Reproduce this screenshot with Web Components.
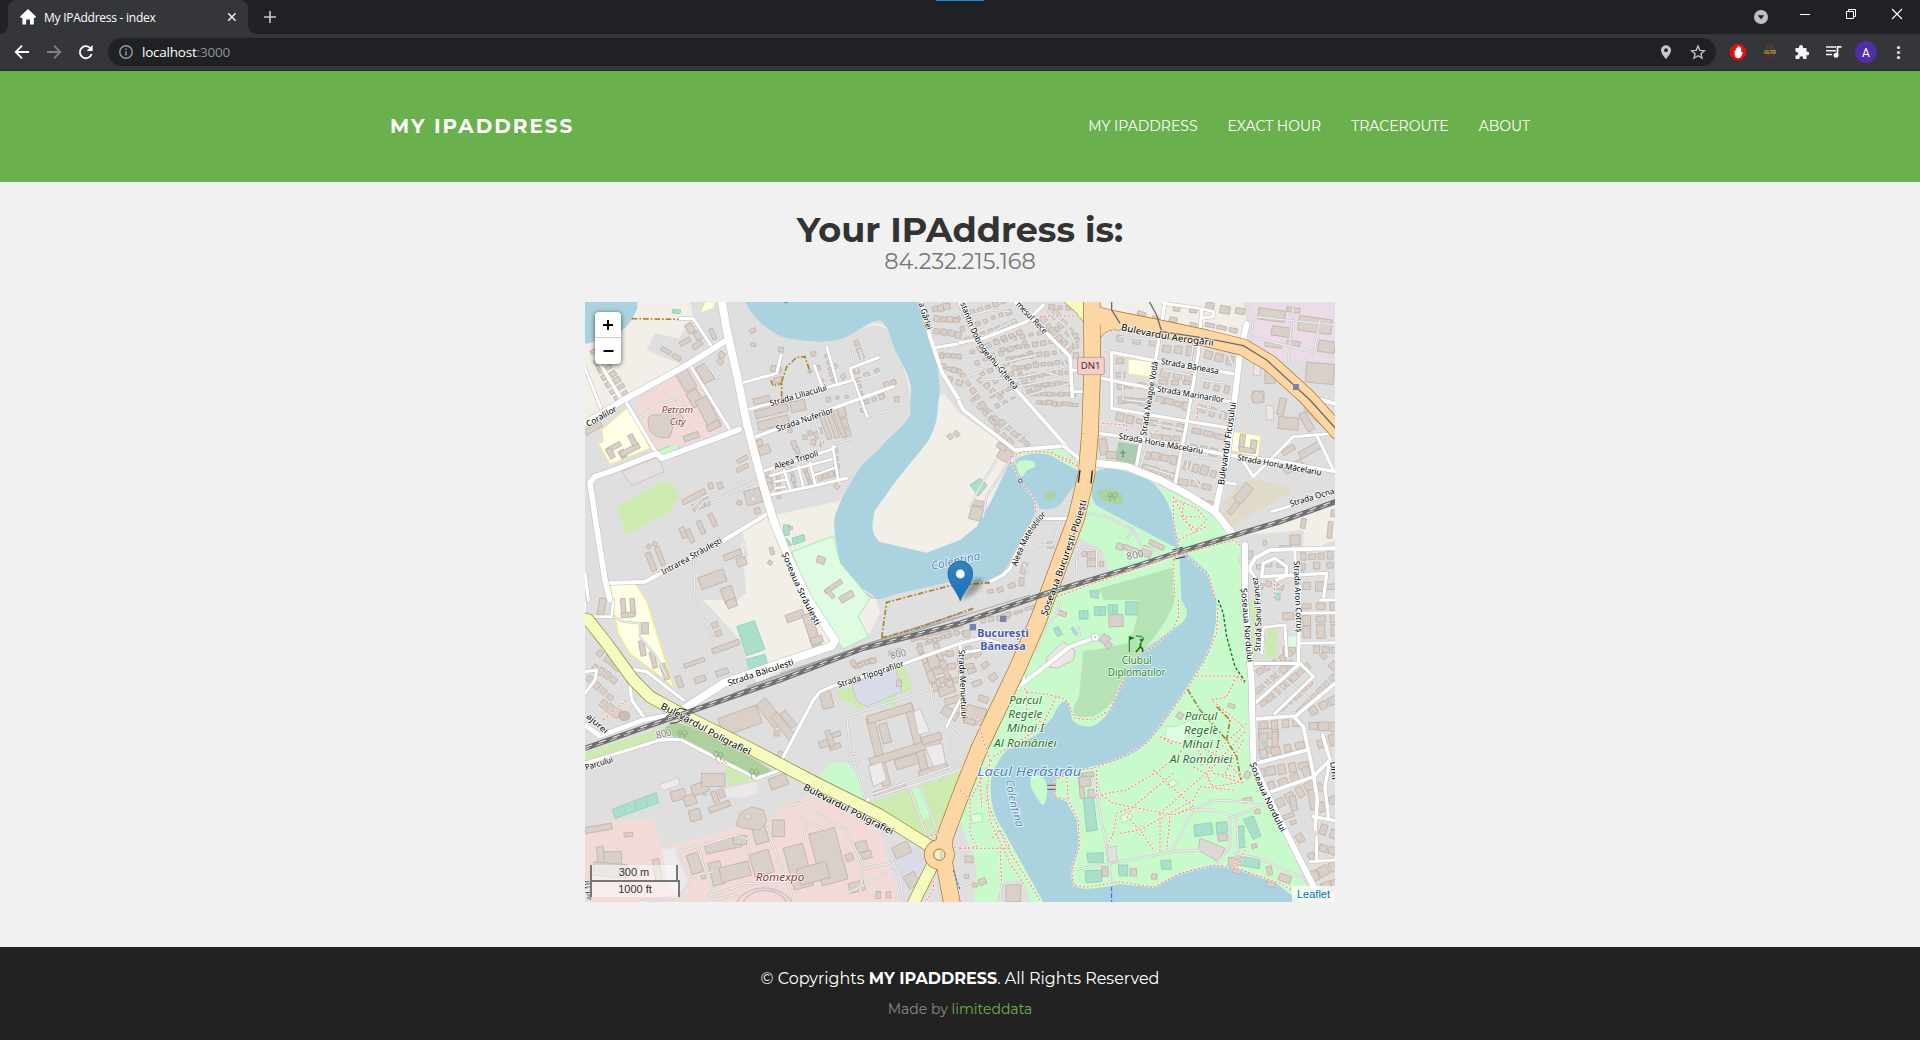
<!DOCTYPE html>
<html lang="en">
<head>
<meta charset="utf-8">
<title>My IPAddress - index</title>
<style>
html,body{margin:0;height:100%;overflow:hidden}
body{width:1920px;height:1040px;background:#f1f1f1;font-family:Montserrat,Inter,sans-serif}
</style>
</head>
<body>
<app-window></app-window>
<script>
const define = (name, html, after) => customElements.define(name, class extends HTMLElement {
  constructor() {
    super();
    const t = document.createElement('template');
    t.innerHTML = html;
    this.attachShadow({mode: 'open'}).append(t.content.cloneNode(true));
    if (after) after(this.shadowRoot, this);
  }
});

/* ---------- browser frame ---------- */
define('tab-strip', `
<style>
:host{display:flex;height:34px;background:#202124;position:relative;font:12px "Open Sans","Noto Sans",sans-serif;color:#fff;align-items:stretch}
.tab{margin-left:8px;width:240px;box-sizing:border-box;padding:0 11px 0 12px;background:#35363a;border-radius:8px 8px 0 0;display:flex;align-items:center;position:relative}
.tab::before,.tab::after{content:"";position:absolute;bottom:0;width:8px;height:8px}
.tab::before{left:-8px;background:radial-gradient(circle at 0 0,#202124 7.5px,#35363a 8px)}
.tab::after{right:-8px;background:radial-gradient(circle at 100% 0,#202124 7.5px,#35363a 8px)}
.t{margin-left:8px;flex:1;font-size:12px;letter-spacing:-.26px;white-space:nowrap}
.plus{margin:11px 0 0 16px}
.sp{flex:1}
.mark{position:absolute;left:936px;top:0;width:48px;height:1px;background:#1f8ad2}
svg{display:block}
</style>
<div class="tab">
<svg width="16" height="16" viewBox="0 0 16 16"><path d="M8 0 16 7.6 15 9H13.8V15.5H10V10.5H6.2V15.5H2.4V9H1L0 7.6Z" fill="#fff"/></svg>
<span class="t">My IPAddress - index</span>
<svg width="10" height="10" viewBox="0 0 10 10"><path d="M1.2 1.2 8.6 8.8M8.6 1.2 1.2 8.8" stroke="#e8eaed" stroke-width="1.6"/></svg>
</div>
<svg class="plus" width="12" height="12"><path d="M6 0V12M0 6H12" stroke="#c8c9cb" stroke-width="1.6"/></svg>
<span class="sp"></span>
<svg width="180" height="34" viewBox="1740 0 180 34" fill="none">
<circle cx="1761" cy="17" r="7" fill="#bdc1c6"/><path d="M1757.7 15.2H1764.3L1761 19.4Z" fill="#202124"/>
<path d="M1800 14.5H1810" stroke="#fff"/>
<path d="M1846.5 11.5H1853.5V18.5H1846.5ZM1848.500 11V9.500H1855.500V16.500H1854" stroke="#fff"/>
<path d="M1892 9 1902 19M1902 9 1892 19" stroke="#fff" stroke-width="1.1"/>
</svg>
<div class="mark"></div>`);

define('tool-bar', `
<style>
:host{display:flex;height:37px;box-sizing:border-box;background:#35363a;border-bottom:1px solid #28292c;padding:4px 0 4px 0;font:13.5px "Open Sans","Noto Sans",sans-serif}
.omni{width:1608px;height:28px;border-radius:14px;background:#202124;display:flex;align-items:center;color:#8f9296}
.omni b{font-weight:400;color:#fff}
.url{letter-spacing:-.22px;margin-left:9px;flex:1;line-height:28px}
svg{display:block;flex:none}
</style>
<svg width="108" height="28" viewBox="0 38 108 28" fill="none" stroke="#fff" stroke-width="1.8">
<path d="M29 52H16M22 45.700 15.700 52 22 58.300"/>
<path d="M47 52H60M54 45.700 60.300 52 54 58.300" stroke="#7f8185"/>
<path d="M90.600 48.500A6 6 0 1 0 91.600 54"/><path d="M92.600 45V51H86.600Z" fill="#fff" stroke="none"/>
</svg>
<div class="omni">
<svg width="14" height="14" viewBox="0 0 14 14" style="margin-left:11px" fill="none" stroke="#9aa0a6" stroke-width="1.4"><circle cx="7" cy="7" r="6.200"/><path d="M7 6.200V10.500M7 3.500V5"/></svg>
<span class="url"><b>localhost</b>:3000</span>
<svg width="64" height="28" viewBox="1652 38 64 28" fill="none"><path d="M1666 45.200A5 5 0 0 0 1661 50.200C1661 54 1666 59 1666 59S1671 54 1671 50.200A5 5 0 0 0 1666 45.200ZM1666 48.300A1.900 1.900 0 1 1 1666 52.100A1.900 1.900 0 0 1 1666 48.300Z" fill="#c6c7c9" fill-rule="evenodd"/>
<path d="M1698 46 1699.800 50.300 1704.400 50.700 1700.900 53.700 1702 58.200 1698 55.800 1694 58.200 1695.100 53.700 1691.600 50.700 1696.200 50.300Z" stroke="#c6c7c9" stroke-width="1.3"/></svg>
</div>
<svg width="204" height="28" viewBox="1716 38 204 28" fill="none">
<path d="M1734.700 44H1741.300L1746 48.700V55.300L1741.300 60H1734.700L1730 55.300V48.700Z" fill="#e30e0e"/>
<path d="M1734.600 50.500V54.500Q1735 58 1738.500 58.200Q1740.500 58 1741.500 56L1743 52.500Q1742 51.500 1741.200 53V47.600H1739.900V46.200H1738.500V46.600H1737.200V48H1735.900V50.500Z" fill="#fff"/>
<g font-family="Liberation Sans" font-weight="700" font-size="4.800" text-anchor="middle"><text x="1770" y="48.500" fill="#774428" textLength="7" lengthAdjust="spacingAndGlyphs">FOR</text><text x="1770" y="53.900" fill="#e0a52f" textLength="12" lengthAdjust="spacingAndGlyphs">HELPER</text><text x="1770" y="59" fill="#7b2327" textLength="8" lengthAdjust="spacingAndGlyphs">GUI</text></g>
<path d="M1795.500 48H1799V47A1.900 1.900 0 0 1 1803 47V48H1806.500V51.500H1807.300A1.900 1.900 0 0 1 1807.300 55.300H1806.500V59H1803.200V58.200A1.800 1.800 0 0 0 1799.400 58.200V59H1795.500V55.400H1796.300A1.800 1.800 0 0 0 1796.300 51.700H1795.500Z" fill="#f1f3f4"/>
<path d="M1826 47H1836M1826 50.800H1836M1826 54.500H1832" stroke="#f1f3f4" stroke-width="1.500"/><path d="M1837.500 54.500V46.900H1841.500" stroke="#f1f3f4" stroke-width="1.700"/><circle cx="1836" cy="55.200" r="2.500" fill="#f1f3f4"/>
<circle cx="1866" cy="52" r="11" fill="#512da8"/><text x="1866" y="56.500" fill="#fff" font-size="12" text-anchor="middle" font-family="Roboto">A</text>
<g fill="#f1f3f4"><circle cx="1898.500" cy="47.500" r="1.600"/><circle cx="1898.500" cy="52.500" r="1.600"/><circle cx="1898.500" cy="57.500" r="1.600"/></g>
</svg>`);

/* ---------- site chrome ---------- */
define('site-header', `
<style>
:host{display:block;height:111px;background:#6ab04c;color:#fff}
.in{width:1140px;height:109px;margin:0 auto;display:flex;align-items:center}
.brand{font-weight:700;font-size:20px;letter-spacing:2px;flex:1;white-space:nowrap}
nav{display:flex;gap:30px;font-size:14px}
</style>
<div class="in"><div class="brand">MY IPADDRESS</div><nav><slot></slot></nav></div>`);

define('nav-link', `
<style>:host{display:block;white-space:nowrap}a{color:#fff}</style><a><slot></slot></a>`);

define('ip-heading', `
<style>
:host{display:block;text-align:center;height:120px;box-sizing:border-box;padding-top:26px}
h1{margin:0;font-size:35px;line-height:44px;font-weight:700;color:#333}
p{margin:0;font-size:22.400px;line-height:18px;font-weight:400;color:#777}
</style>
<h1>Your IPAddress is:</h1><p><slot></slot></p>`);

define('site-footer', `
<style>
:host{display:block;background:#222;height:93px;box-sizing:border-box;padding-top:20px;text-align:center;color:#fff}
div{font-size:16px;line-height:24px}
p{margin:6px 0 0;font-size:14px;line-height:24px;color:#888}
span{color:#6ab04c}
</style>
<div>© Copyrights <b>MY IPADDRESS</b>. All Rights Reserved</div>
<p>Made by <span>limiteddata</span></p>`);

/* ---------- map: three units per CSS pixel ---------- */
const E = 1140, S = 900;
const shift = (s, dx, dy) => s.trim().split(/\s+/).map(p => { const [x, y] = p.split(',').map(Number); return (x + dx) + ',' + (y + dy); }).join(' ');
const parts = [];
const poly = (f, s, dx = 0, dy = 0, k = '') => parts.push(`<polygon points="${shift(s, dx, dy)}" fill="${f}" ${k ? `stroke="${k}" stroke-width="2.500"` : ''}/>`);
/* closed smooth outline through the midpoints of the given points */
const blob = (f, s, dx = 0, dy = 0, k = '') => {
  const p = s.trim().split(/\s+/).map(q => q.split(',').map(Number)).map(q => [q[0] + dx, q[1] + dy]);
  const m = (a, b) => `${(a[0] + b[0]) / 2},${(a[1] + b[1]) / 2}`;
  let d = 'M' + m(p[p.length - 1], p[0]);
  p.forEach((q, i) => d += `Q${q} ${m(q, p[(i + 1) % p.length])}`);
  parts.push(`<path d="${d}Z" fill="${f}" ${k ? `stroke="${k}" stroke-width="3"` : ''}/>`);
};
const line = (c, w, s, dx = 0, dy = 0, x = '') => parts.push(`<polyline points="${shift(s, dx, dy)}" fill="none" stroke="${c}" stroke-width="${w}" stroke-linejoin="round" ${x}/>`);
const roads = (list, dx, dy, edge = '#bfbdbb', fill = '#fff') => {
  list.forEach(([w, s]) => line(edge, w + 3, s, dx, dy, 'stroke-linecap="round"'));
  list.forEach(([w, s]) => line(fill, w, s, dx, dy, 'stroke-linecap="round"'));
};
const house = (x, y, w, h, a = 0) => parts.push(`<rect x="${-w / 2}" y="${-h / 2}" width="${w}" height="${h}" transform="translate(${x} ${y}) rotate(${a})"/>`);
const BF = 'fill="#d9d0c9" stroke="#c2b2a8" stroke-width="2.500"';
const houses = (list, dx = 0, dy = 0) => { parts.push(`<g ${BF}>`); list.forEach(b => house(b[0] + dx, b[1] + dy, b[2], b[3], b[4])); parts.push('</g>'); };
let seed = 7;
const rnd = () => (seed = (seed * 16807) % 2147483647) / 2147483647;
const rows = (list, dx = 0, dy = 0) => {
  parts.push(`<g ${BF}>`);
  list.forEach(([x1, y1, x2, y2, n, w, h]) => {
    const a = Math.atan2(y2 - y1, x2 - x1) * 180 / Math.PI;
    for (let i = 0; i < n; i++) {
      const t = n > 1 ? i / (n - 1) : 0;
      house(x1 + dx + (x2 - x1) * t, y1 + dy + (y2 - y1) * t + rnd() * 4 - 2, w * (.7 + rnd() * .5), h * (.7 + rnd() * .5), a);
    }
  });
  parts.push('</g>');
};
const label = (t, x1, y1, x2, y2, dx = 0, dy = 0, c = '#000', z = 25, x = '') => {
  const a = Math.atan2(y2 - y1, x2 - x1) * 180 / Math.PI, l = Math.hypot(x2 - x1, y2 - y1);
  parts.push(`<text transform="translate(${x1 + dx} ${y1 + dy}) rotate(${a.toFixed(2)})" textLength="${l.toFixed(0)}" lengthAdjust="spacingAndGlyphs" font-size="${z}" fill="${c}" ${x}>${t}</text>`);
};
let pid = 0;
const curved = (t, d, len, z = 25, c = '#000', x = '') => {
  const id = 'p' + pid++;
  parts.push(`<path id="${id}" d="${d}" fill="none" stroke="none"/><text font-size="${z}" fill="${c}" ${x}><textPath href="#${id}" textLength="${len}" lengthAdjust="spacingAndGlyphs">${t}</textPath></text>`);
};

function buildMap() {
  const W = '#aad3df', G = '#c8facc', L = '#f2efe9', P = '#cdebb0', T = '#aae0cb', TK = '#8fcdb5', Y = '#ffffe5', R = '#f2dad9', H = '#dffce2';
  parts.push('<rect x="0" y="0" width="2300" height="1830" fill="#dfdfdf"/>');
  /* unzoned land */
  poly(L, '15,120 180,6 350,6 385,95 330,60 300,110 330,180 200,260 120,310 15,360');
  poly('#dfdfdf', '225,98 200,150 320,200 430,110 415,6 330,6 345,80 310,120');
  poly(L, '15,180 50,180 130,310 15,370');
  blob(L, '640,120 780,125 900,50 950,130 1000,300 980,360 1010,300 1000,250 960,140 900,60 780,118 690,126');
  poly(L, '585,645 790,600 900,600 1040,330 1090,280 1140,340 1270,430 1300,470 1290,640 1150,780 1020,800 800,800 760,700 630,760');
  poly(L, '340,790 480,690 560,650 640,780 770,1020 530,1150 480,1020 370,900');
  poly(L, '640,760 760,700 890,900 900,940 870,1000 770,1030 720,960');
  poly('#dfdfdf', '340,785 480,700 500,880 470,900 370,900');
  poly(L, '530,1148 870,1035 900,1010 930,1010 900,1040 530,1160');
  poly(L, '800,710 1030,690 1030,760 1125,720 1125,600 1000,640 830,705', E, 0);
  poly(L, '420,6 850,6 860,70 845,140 700,110 440,50', E, 0);
  /* park */
  poly(G, '1520,500 1680,530 1780,580 1900,635 1955,700 1990,760 2000,900 2020,1380 2200,1806 1180,1806 1190,1700 1140,1560 1380,920 1500,640');
  poly('#dfdfdf', '350,710 425,750 450,820 250,870 300,760', E, 0);
  blob(G, '150,460 210,440 310,440 370,520 340,520 200,470', E, 0);
  poly('#dfdfdf', '310,620 360,540 350,650 250,860 180,870 80,900 100,850 170,790 220,640', E, 0);
  /* water */
  blob(W, '0,0 180,0 165,45 130,95 55,120 0,140');
  parts.push(`<path fill="${W}" d="M0,0H172Q160,60 120,97Q80,118 0,132ZM493,0C515,50 560,90 610,112C680,128 740,128 780,118C830,100 860,68 895,60C920,62 930,110 945,150C965,190 992,230 993,270L990,345C970,385 930,405 900,445L845,495C810,550 780,600 764,650C758,700 775,745 780,790L865,888Q880,900 905,896L950,882L1110,845L1225,846C1280,815 1290,790 1300,760L1340,690L1366,640L1368,605L1330,550L1318,515Q1300,480 1290,485L1275,515L1235,600L1190,680L1140,720L1040,758L900,726C878,705 876,690 878,665L884,632L950,540L1040,430C1060,400 1072,360 1073,330L1079,265C1078,200 1055,130 1022,30L1012,0Z"/>
<path fill="${W}" d="M1305,480Q1355,450 1410,465L1498,515L1490,545L1440,615Q1410,635 1378,625L1366,600L1330,550Z"/>
<path fill="${W}" d="M1538,520Q1560,502 1600,507Q1680,522 1720,550Q1760,590 1775,640L1798,740L1882,815L1908,900Q1915,980 1885,1060L1835,1140L1790,1210L1740,1285L1700,1330Q1640,1385 1530,1400L1500,1415L1430,1435L1427,1490L1460,1505L1490,1560L1497,1640L1480,1700Q1465,1745 1500,1765Q1540,1770 1620,1752Q1690,1760 1730,1760L1800,1720L1900,1693L1970,1703L2090,1750L2160,1806L1390,1806L1320,1680L1270,1590Q1232,1540 1232,1460Q1230,1410 1280,1350L1370,1305L1420,1250Q1435,1205 1460,1202Q1470,1210 1474,1250Q1480,1280 1535,1280Q1580,1260 1600,1210L1640,1120L1690,1050L1790,980Q1825,960 1820,930L1805,900L1797,760L1790,745L1640,665L1555,620Q1530,600 1536,570Z"/>`);
  blob(G, '165,482 220,480 230,500 200,510 185,535 175,520', E, 0);
  blob('#aed1a0', '255,578 285,572 290,590 270,602 255,595', E, 0);
  blob('#aed1a0', '405,580 430,565 480,572 495,600 480,615 430,605', E, 0);
  blob(G, '225,520 265,540 258,610 245,618 210,560 212,530', E, S);
  /* green, golf and parkland patches */
  parts.push('<path fill="#b5e3b5" d="M1560,865L1778,803L1783,905Q1765,960 1700,1040Q1650,1090 1610,1190Q1580,1230 1540,1250L1490,1250Q1475,1235 1482,1220L1497,1190L1510,1052L1560,1047L1640,1030Q1680,970 1672,900L1570,900Z"/>');
  poly(P, '110,620 250,542 275,545 302,595 275,615 278,628 140,706 125,684 133,678');
  poly('#c8facc', '235,452 292,430 300,444 245,470', 0, 0, '#8edc92');
  poly(H, '635,755 760,708 782,790 870,895 835,950 865,1010 790,1047 700,930', 0, 0, '#93ea9b');
  poly(P, '15,455 260,380 300,380 560,520 520,520 430,485 290,410 240,412 15,495', 0, S);
  blob('#add19e', '260,370 320,370 590,510 560,535 520,530 430,480 330,425 250,400', 0, S);
  poly(P, '435,490 540,530 505,545 445,560', 0, S);
  poly('#c8facc', '705,545 750,490 805,488 845,540 850,610 840,625 710,560', 0, S);
  poly(P, '850,615 1140,515 1140,570 1075,680 1070,700 1020,712 860,640', 0, S);
  poly(G, '995,565 1030,560 1050,650 1030,660', 0, S);
  poly(P, '770,270 830,255 830,300 950,320 930,200 970,195 1000,270 960,280 830,330 820,310 785,305', 0, S);
  poly('#dadbe8', '815,255 945,200 965,275 860,320 830,300', 0, S, '#c0c0cf');
  poly('#dadbe8', '930,765 1000,740 1040,780 1000,870 970,860 940,810', 0, S);
  poly(Y, '65,390 145,320 210,445 90,493 55,430 70,425', 0, 0, '#f0e48a');
  poly(Y, '90,855 165,850 200,905 280,1160 230,1120 150,1060 115,1000 100,920', 0, 0, '#fbf04d');
  poly(Y, '375,6 405,6 400,25 360,38', 0, 0, '#f0e48a');
  poly(Y, '505,178 575,185 580,235 555,228 505,222', E, 0, '#f0e98a');
  poly(Y, '820,395 902,408 893,472 812,450', E, 0, '#f0e98a');
  poly(R, '160,310 285,232 325,200 440,385 330,435 220,440');
  poly(R, '15,680 105,660 222,660 245,745 590,650 595,615 680,585 850,650 900,700 960,905 15,905', 0, S);
  poly('#ecdce9', '875,6 1130,6 1130,185 950,180 855,125', E, 0);
  poly('#e0dbc9', '845,545 900,540 990,560 990,580 880,640 800,690 785,610', E, 0);
  poly('#aacbaf', '475,425 535,435 530,495 465,480', E, 0);
  poly(H, '620,380 650,380 690,360 705,380 665,430 625,425 615,405', E, S, '#b4e5b9');
  poly('#e5e0e0', '125,515 235,470 253,515 155,557', 0, 0, '#d0b8b8');
  poly('#ece8e8', '435,568 530,545 535,575 500,592 440,592', 0, S);
  poly('#eceaea', '235,555 295,533 300,555 250,572', 0, S, '#d8c4c4');
  poly('#eceaea', '245,750 285,742 330,830 320,880 265,860', 0, S);
  poly('#ece6e6', '258,175 310,125 345,150 340,180 290,205 265,200', E, S, '#c9b5b5');
  poly('#ded8d8', '720,715 795,745 775,785 715,750', E, S, '#c9b0b0');
  poly('#dfdfdf', '125,855 185,850 215,905 110,905', E, S);
  poly(P, '870,0 890,0 890,175 870,180', E, S); poly(P, '920,90 955,85 945,175 915,175', E, S); poly(H, '985,110 1012,108 1012,160 985,160', E, S);

  /* sport pitches */
  const pitch = (s, dx, dy) => poly(T, s, dx, dy, TK);
  ['277,28 302,30 300,41 277,39', '610,675 628,675 628,705 612,707', '636,715 672,703 675,722 640,735', '620,715 635,735 625,738'].forEach(s => pitch(s));
  ['470,80 523,62 555,148 500,167', '500,178 555,163 563,192 510,210', '97,628 228,578 236,608 106,655'].forEach(s => pitch(s, 0, S));
  ['30,555 60,535 82,555 55,588', '390,872 418,870 415,895 392,892'].forEach(s => pitch(s, E, 0));
  ['497,5 532,5 532,45 497,45', '358,32 384,32 384,57 358,57', '404,20 436,20 436,46 404,46', '444,14 472,14 472,40 444,40', '280,85 295,80 308,102 293,110', '370,595 400,590 412,690 380,695', '702,675 755,668 760,702 705,710', '768,668 800,665 803,695 770,700', '850,658 880,648 903,708 880,718', '836,678 852,678 852,710 836,712', '836,715 854,715 854,742 838,744', '380,760 430,758 430,788 385,788', '375,812 425,810 425,845 378,848', '475,795 503,795 503,828 477,828', '602,782 632,780 634,808 605,808', '840,768 900,775 898,806 840,796'].forEach(s => pitch(s, E, S));
  line('#8fcdb5', 2, '371,932 371,957', E); line('#8fcdb5', 2, '419,920 419,946', E); line('#8fcdb5', 2, '458,914 458,940', E);
  ['130,616 138,644', '163,603 171,632', '196,590 204,620'].forEach(s => line('#8fcdb5', 2, s, 0, S));
  ['32,645 65,640 68,665 38,670', '620,550 640,537 655,550 630,565', '480,650 505,635 518,650 490,670', '525,690 542,678 556,690 540,705'].forEach(s => poly(H, s, E, S, '#a5dca8'));

  /* buildings, north-west */
  houses([[315,125,34,14,-30],[258,152,30,12,30],[290,172,28,12,30],[330,85,20,30,-30],[357,105,26,26,-30],[398,102,12,34,-25],[352,135,32,16,-35],[318,240,38,66,-30],[345,295,36,48,-30],[385,340,38,100,-28],[375,220,34,56,-30],[400,378,40,20,-25],[334,410,46,18,-20],[425,165,18,18,30],[420,185,18,14,40],[40,385,56,16,-30],[100,442,48,14,-28],[92,460,16,30,-28],[128,462,18,24,-28],[150,450,62,16,-28],[158,420,16,36,-28],
  [342,590,76,16,-28],[355,618,36,20,-25],[380,605,14,24,-20],[392,558,14,18,-20],[420,557,14,20,-20],[310,698,16,34,-25],[330,708,14,42,-25],[363,682,14,42,-25],[398,660,14,42,-25],[487,478,34,12,-28],[487,504,38,12,-28],[478,608,14,12,20],[520,590,48,44,-15],[532,632,16,18,-20],[213,785,16,58,-20],[240,768,14,58,-22],[206,740,12,12,30],[225,732,12,12,30],[458,765,56,18,-22],[485,785,28,26,-20],[397,838,80,38,-20],[445,885,34,48,-20],[576,753,12,22,-15],[570,788,12,12,30],[518,92,18,12,-25],[520,134,14,10,10],
  [545,300,50,18,-14],[575,333,100,24,-14],[580,368,94,26,-14],[654,318,44,32,-12],[594,240,24,16,-15],[603,149,14,14,10],[580,205,14,18,10],[598,210,12,16,10],[553,450,34,26,-20],[538,428,18,18,-20],[643,435,14,26,-20],[652,452,12,20,-20],[675,412,12,14,0],[710,405,14,20,-25],[630,392,12,12,-10],[723,780,24,20,20],[760,860,60,14,-35],[800,890,44,20,-30],[750,880,34,12,50],[1110,410,14,16,-45],[1130,402,14,18,-45],[632,684,10,10,0]]);
  parts.push(`<path ${BF} d="M204,360Q205,340 240,345Q262,328 300,340Q320,360 300,378L282,372Q275,390 270,412Q225,420 208,390Z"/><circle cx="520" cy="597" r="9" fill="#dfdfdf" stroke="#c2b2a8" stroke-width="2"/>`);
  rows([[50,190,110,295,6,15,18],[75,180,135,280,6,15,18],[40,155,60,200,2,14,16],[740,170,760,240,5,11,11],[765,200,790,230,2,14,14],[830,130,845,170,3,14,14],[700,160,715,205,2,14,14],[830,215,850,330,6,14,14],[783,335,803,400,3,26,24],[560,520,570,560,3,20,20],[635,515,645,560,3,24,10],[675,505,690,550,3,24,10],[720,530,770,520,4,12,24],[765,450,770,500,3,13,14],[690,215,725,240,2,12,12],[860,305,905,290,3,14,12],[860,225,890,212,2,14,12],[920,255,940,245,2,16,18],[950,298,951,298,1,18,16],[595,540,596,585,3,30,10],[770,560,772,562,1,15,13],[690,400,720,395,2,12,15],[700,425,725,430,2,12,15],[745,298,800,292,3,12,12]]);
  houses([[735,375,14,90,-20],[757,370,14,92,-20],[778,370,14,90,-20]]);

  /* dense blocks either side of the trunk road */
  for (let r = 0; r < 9; r++) rows([[12 + r * 15, 55 + r * 33, 150 + r * 16, 5 + r * 31, 7, 15, 13]], E - 20, 0);
  for (let r = 0; r < 8; r++) rows([[110 + r * 18, 125 + r * 26, 290 + r * 8, 90 + r * 32, 8, 15, 12]], E, 0);
  rows([[10,230,110,380,8,18,15],[40,300,150,425,7,18,15],[90,340,200,430,7,17,15],[60,240,120,290,4,18,15],[250,60,330,150,6,16,20],[285,45,350,120,4,18,24],[345,110,348,165,3,20,18],[275,20,350,25,4,16,13]], E, 0);
  rows([[1065,25,1100,20,3,17,16],[1070,55,1130,60,4,18,16],[1070,95,1135,105,4,16,16],[1085,165,1138,170,4,16,16],[1090,200,1138,215,4,16,14],[1110,240,1138,250,2,16,14]]);
  rows([[480,115,580,130,3,26,20],[480,185,485,300,4,20,22],[510,255,580,262,3,24,20],[500,300,550,305,3,22,20],[620,145,690,155,3,24,26],[615,220,690,235,3,26,22],[610,245,680,250,3,24,14],[600,300,680,318,4,26,22],[480,350,540,365,3,24,20],[580,370,660,385,3,28,22],[590,410,650,415,3,26,16],[745,165,810,180,3,24,24],[740,255,800,270,3,20,24],[725,325,790,345,3,22,24],[710,395,780,410,3,28,20],[560,465,640,480,4,22,22],[560,505,640,530,4,24,20],[700,440,760,455,3,22,22],[680,495,760,520,4,22,26],[670,545,740,560,3,26,18],[690,590,750,610,3,20,14],[640,60,700,75,2,22,14],[545,40,590,55,2,26,14],[650,25,700,30,2,26,16],[750,75,820,90,3,26,16],[750,20,840,35,3,30,22]], E, 0);
  houses([[935,45,80,34,8],[1065,75,100,44,8],[965,95,60,28,8],[940,135,50,14,8],[1100,140,50,34,8],[1080,220,84,60,5],[1000,30,40,14,8],[1000,130,40,14,8],[930,230,30,40,0],[895,290,34,34,0],[985,370,60,36,5],[965,320,20,50,12],[1060,340,60,20,45],[1040,365,60,22,60],[1050,450,70,22,-30],[985,450,40,16,-30],[1000,500,60,20,-30],[430,440,24,48,-8],[455,465,30,20,0],[846,425,16,44,8],[880,440,18,40,8],[860,450,44,14,8],[850,580,60,30,-50],[820,625,40,16,-50],[135,465,40,36,30],[125,440,30,16,30],[48,640,36,40,15],[55,610,34,16,10],[395,765,26,20,0],[395,790,26,20,0],[425,792,12,14,0],[372,762,14,14,0],[480,740,22,18,20],[520,750,60,14,20],[590,735,48,14,25],[560,755,30,30,20],[185,845,14,24,0],[192,805,16,34,15],[92,874,16,10,-10],[272,735,18,18,0],[1005,720,30,30,0],[975,745,34,16,0],[870,765,16,24,0],[1110,690,14,50,5],[1120,640,14,20,5],[1030,670,14,30,10]], E, 0);
  parts.push(`<circle cx="2032" cy="292" r="18" ${BF}/><rect x="2022" y="176" width="20" height="50" fill="#ece8e8" stroke="#cfb8b8" stroke-width="2" transform="rotate(5 2030 200)"/><rect x="2058" y="316" width="22" height="44" fill="#ece8e8" stroke="#cfb8b8" stroke-width="2"/>`);

  /* south-west */
  houses([[437,140,86,16,-20],[343,188,64,12,-20],[426,217,38,18,-20],[360,238,34,18,-20],[298,245,16,36,-20],[405,75,18,16,-20],[415,100,18,16,-20],[645,48,56,24,-20],[695,90,28,100,-18],[710,120,36,20,-18],[187,145,16,46,-10],[220,180,14,50,-15],[254,215,16,50,-20],[195,85,20,34,0],[130,20,14,50,-5],[158,20,14,50,-5],[144,45,42,14,-5],[455,10,30,24,-20],[65,20,20,50,10],[480,362,122,56,-20],[570,340,36,90,-38],[610,380,24,90,-38],[625,358,20,56,-40],[590,400,16,16,0],[600,475,22,40,25],[595,545,54,34,-20],[740,300,34,50,-15],[735,430,36,20,-20],[765,405,34,14,-20],[765,440,34,14,-20],[750,415,16,50,-20],[345,645,34,34,-15],[418,620,66,18,-20],[295,585,44,30,-15],[330,600,36,30,-20],[360,565,50,32,-20],[400,540,70,40,0],[405,590,16,34,-20],[425,580,16,26,-20],[145,704,26,12,-5],[55,685,82,18,-10],[95,790,60,70,0],[62,770,20,60,-5],[232,810,20,66,-10],[90,810,100,40,5],[345,790,36,60,-18],[430,735,110,32,-12],[480,720,40,26,0],[410,820,36,70,-14],[465,815,90,44,-14],[545,790,60,70,-16],[540,700,40,60,-15],[595,685,36,50,0],[655,800,60,130,-15],[745,770,80,160,-15],[700,820,90,50,-15],[845,740,34,32,-15],[860,765,30,22,-15],[808,772,22,22,-20],[830,860,46,30,-15],[895,885,14,22,0],[925,885,14,18,0],[965,750,50,36,-25],[995,840,36,40,-30],[370,830,12,12,0]], 0, S);
  houses([[895,455,24,210,-14],[1010,415,24,210,-14],[930,340,140,24,-17],[975,455,220,24,-17],[930,570,100,18,-17],[1060,510,90,18,-17],[980,485,70,30,-17],[1055,415,60,22,-17],[915,400,26,60,-14],[1060,180,34,46,-12],[1085,160,34,16,-15],[1070,215,46,18,-15],[1090,240,50,18,-15],[1100,270,50,26,-20],[1110,340,50,26,30],[1120,300,50,20,-15],[850,190,60,14,-20],[957,250,14,20,0],[820,190,14,20,-20]], 0, S);
  ['865,500 905,485 920,540 880,560', '1035,440 1085,430 1098,490 1060,500', '1000,335 1020,325 1050,395 1015,405'].forEach(s => poly('#eceaea', s, 0, S, '#cdb8b8'));
  parts.push(`<path ${BF} d="M468,1575L480,1540L515,1520L550,1530L560,1565L540,1590L490,1585Z"/><path d="M495,1555a10,8 0 1 0 16,-10a10,8 0 1 0 -16,10Z" fill="#dfdfdf" stroke="#b9a99f" stroke-width="2"/>`);
  rows([[45,200,100,240,4,18,20],[30,240,90,290,4,18,20],[60,160,110,200,3,22,20],[70,310,110,340,3,18,24],[1020,135,1110,105,5,14,12],[840,195,880,182,3,16,14],[930,160,955,155,2,14,13],[1070,250,1130,240,3,18,18]], 0, S);

  /* south-east */
  houses([[305,40,28,14,20],[468,62,42,36,-3],[435,118,26,26,35],[445,135,18,18,35],[380,525,44,14,-8],[365,560,14,70,-4],[395,580,22,24,0],[375,545,34,30,-8],[788,712,28,22,-5],[883,738,16,12,-20],[862,600,26,14,-10],[892,635,16,12,0],[820,785,30,26,0],[862,525,16,20,30],[830,815,24,10,10],[435,815,18,28,0],[520,817,20,22,0],[583,830,16,16,10],[928,812,16,26,-10],[975,835,36,22,20],[932,853,26,14,15],[815,318,20,12,20],[660,347,18,18,-60],[70,297,28,18,20],[45,345,60,50,15],[30,365,34,16,15],[985,648,36,12,-20],[1000,667,18,10,-20],[27,778,24,20,0],[67,845,22,18,-20],[160,880,44,50,0],[20,830,12,12,0],[45,855,14,12,0],[925,400,60,30,0],[910,430,26,60,0],[945,425,18,60,0],[935,450,40,18,0]], E, S);
  rows([[1040,60,1125,55,3,30,26],[1040,95,1125,90,3,26,36],[1040,20,1125,18,3,30,22],[1070,150,1125,150,3,22,20],[985,50,988,150,2,24,34],[900,215,990,160,5,18,18],[895,270,990,190,6,20,18],[910,310,1040,200,8,20,18],[970,320,1050,250,5,22,18],[1020,330,1120,235,6,22,18],[910,375,1010,370,4,24,24],[910,460,1020,435,4,26,24],[900,520,1030,495,5,26,26],[935,560,1040,520,4,24,34],[960,610,1050,560,4,28,28],[1000,610,1060,600,2,24,50],[1060,330,1120,300,3,28,26],[1060,380,1120,380,3,26,26],[1085,430,1120,420,2,24,34],[1080,560,1120,520,2,24,30],[1085,620,1120,600,2,28,24],[1020,715,1055,770,2,24,26],[1090,690,1120,700,2,24,26],[1090,745,1120,755,2,24,20],[1060,830,1120,800,3,28,26],[1100,860,1125,850,2,26,28],[1090,170,1120,200,2,20,20]], E, S);
  rows([[925,790,960,790,2,18,20],[1030,770,1110,765,4,20,20],[1030,800,1110,795,3,18,24],[925,850,960,860,2,22,20],[1040,860,1080,860,2,26,26],[900,800,900,860,2,16,24],[915,730,930,728,1,14,14],[1110,860,1112,880,1,20,40]], E, 0);
  rows([[280,120,420,78,9,15,12],[400,70,430,100,2,14,14],[420,150,426,250,4,18,16],[390,160,395,200,2,20,24],[300,150,345,260,5,30,18],[350,140,390,250,5,28,18],[440,170,470,250,3,20,24],[490,60,560,50,4,16,14]], 720, 900);
  rows([[1295,855,1260,870,2,20,12],[1280,945,1350,925,3,26,10],[1050,1025,1130,1000,4,16,12],[1160,1000,1170,1100,3,18,22],[1190,1060,1240,1130,3,20,26]]);

  /* minor ways */
  const thin = (s, dx, dy) => { line('#c3c3c3', 7, s, dx, dy); line('#efefef', 4, s, dx, dy); };
  ['340,785 345,860 340,900','480,690 500,770','335,655 370,605 430,590 530,545','335,625 370,590 430,575 530,530','175,355 240,310 300,295 330,340','365,170 410,235 450,215','815,150 830,215','840,150 850,190','835,240 900,222','862,350 950,325','735,440 820,415','705,360 730,440','850,870 880,890'].forEach(s => thin(s));
  ['345,0 400,120','100,50 130,65 180,70 180,110 230,170 260,230','780,355 1060,265','1050,250 1060,330 1140,400','760,270 800,350 810,450 860,610','860,600 1140,510','870,585 1140,490','990,570 1045,720','1020,560 1075,700','645,615 680,560','600,620 660,610 800,690 850,800 840,880','840,808 930,790','660,655 740,690','680,670 670,720','560,680 640,900','300,755 470,705 505,720 500,760','350,740 410,905','290,760 330,840 300,890 180,905','330,830 400,815','380,890 500,850 600,855','400,900 480,880','800,880 920,820','930,770 960,830 970,905','1110,380 1110,470 1140,500'].forEach(s => thin(s, 0, S));
  parts.push('<circle cx="822" cy="1375" r="15" fill="none" stroke="#c3c3c3" stroke-width="8"/><circle cx="822" cy="1375" r="15" fill="none" stroke="#f4f4f4" stroke-width="4"/><path d="M470,1806A90,70 0 0 1 635,1806M490,1806A70,55 0 0 1 620,1806" fill="none" stroke="#c9c3c3" stroke-width="4"/>');
  ['0,130 90,100 165,60','15,170 80,160 160,120','20,50 90,30 150,35','45,210 120,190 230,165','60,240 190,230 320,200','0,240 60,215 110,160','170,260 330,230','190,290 330,250','215,60 280,120 320,200','260,30 320,80 345,130','40,310 140,260','80,350 180,290','120,390 220,320','170,420 260,350','240,210 300,230','375,640 440,650 520,690 545,740','500,720 520,690','545,740 600,755','290,860 350,820 350,770 375,740','250,640 215,700 230,735 280,735','280,735 300,660','190,790 205,815','370,740 410,745 410,805','480,110 590,120','485,200 490,300','500,300 600,310','620,110 700,130 690,210','610,210 690,225','610,260 690,280','730,130 800,150 820,200','725,240 800,250','710,320 790,340 785,370','580,370 680,390','560,440 540,500','560,500 650,530','690,440 680,510 720,560','700,470 790,480','880,60 870,130','1000,10 980,240 1020,300 1010,350','870,110 1120,170','880,50 1130,75','1080,60 1060,170','840,310 880,320 870,350','110,480 60,560 30,620','150,480 80,590 70,650','210,690 180,770','860,720 840,780 860,830','940,870 1000,830'].forEach(s => thin(s, E, 0));
  ['400,535 445,770','635,755 700,630 760,600 860,605 930,620','700,630 760,630 820,650 900,620','810,650 810,740 770,790','830,650 835,760','340,810 450,790 640,755 720,750','445,770 455,860','820,760 900,775 1050,845','410,535 420,600','455,740 460,790','360,110 355,80','150,100 110,70','60,90 50,60','230,160 240,110 290,40 300,0','0,250 40,240','0,480 40,450','120,905 125,850 185,845 210,905','0,860 30,850','900,120 870,60','890,230 1000,330','910,220 1020,320','930,200 1040,290'].forEach(s => thin(s, E, S));
  poly('#e1e1e1', '440,742 468,738 472,785 445,788', E, S, '#c5c5c5');

  /* side streets */
  roads([[9,'480,250 590,220 603,165'],[9,'500,330 820,240 810,205 895,173'],[10,'515,415 690,350 940,260'],[8,'740,140 770,245'],[8,'703,195 725,258'],[8,'820,235 862,350'],[9,'545,515 750,450 765,440'],[8,'758,440 775,540'],[9,'570,585 700,558 800,535'],[8,'570,527 755,478'],[8,'612,510 630,565'],[8,'655,500 670,560'],[8,'690,490 705,550'],[7,'585,545 615,540'],[7,'585,565 615,560'],[7,'705,525 765,503'],[11,'140,310 240,478'],[10,'330,195 447,385'],[11,'60,190 125,300'],[9,'15,205 65,330'],[10,'300,56 340,56 395,140'],[12,'565,640 400,740 250,815 195,845 80,850'],[10,'15,820 25,900'],[12,'1025,10 1050,110 1085,215 1140,305'],[10,'1070,142 1145,130'],
    [10,'1230,845 1270,825 1290,805 1320,740 1345,690 1370,655 1465,655']], 0, 0);
  roads([[10,'0,128 70,115 200,65 250,15'],[12,'-3,305 10,330 165,450 310,438'],[11,'0,10 40,95 70,140 170,270 355,480'],[11,'160,0 250,90 330,170 337,290'],[9,'337,275 370,275'],[9,'337,210 370,213'],[10,'455,157 600,185 825,222'],[10,'425,235 600,270 810,306'],[10,'455,325 600,350 800,383'],[10,'415,400 600,425 800,465 950,482 1125,515'],[9,'455,157 455,325'],[10,'615,6 590,160 560,330 530,495'],[10,'725,30 715,160 680,370 645,555'],[9,'840,470 880,530 1000,410 1125,400'],[9,'1070,405 1120,510'],[9,'935,635 1125,578'],[9,'610,10 720,25 760,35 760,50 725,55'],[9,'780,545 825,552'],[12,'860,820 885,775 930,750 1125,745'],[10,'865,800 895,850 900,900'],[10,'905,830 910,790 945,775 980,800 978,828 950,840'],[10,'905,830 1100,820 1090,900'],[9,'1005,750 1005,850'],[12,'1065,295 1140,315']], E, 0);
  roads([[10,'870,190 1020,190 1060,230'],[10,'885,310 1020,190'],[10,'945,340 1060,230'],[11,'1005,350 1125,250'],[11,'885,357 1000,348 1030,380 1060,520 1072,600 1065,690'],[11,'890,490 1040,450'],[11,'920,580 1060,530 1110,480 1088,405'],[10,'1060,650 1125,662'],[10,'1110,480 1095,560 1105,650'],[10,'1020,-40 1015,190'],[9,'1015,40 1125,38'],[9,'1015,130 1125,128'],[9,'905,160 910,82 975,75 980,168'],[9,'1050,785 1125,780'],[9,'1070,710 1070,785'],[12,'170,265 330,140 400,115'],[9,'190,225 190,250'],[9,'0,125 70,115 120,130'],[9,'0,160 60,150'],[9,'1080,0 1125,0']], E, S);
  parts.push('<circle cx="1546" cy="1012" r="12" fill="#fff" stroke="#c9c9c9" stroke-width="3"/><circle cx="1546" cy="1012" r="3" fill="#bbb"/>');
  roads([[10,'150,260 155,300 190,350'],[10,'160,208 200,215 310,300'],[9,'15,215 50,210 45,240 15,280'],[10,'15,490 240,420 300,418 420,480 530,535 600,510'],[10,'600,490 700,300 720,275 760,258 960,195 1140,130 1200,115'],[9,'1140,130 1145,350'],[8,'15,50 95,50 100,0'],[8,'1100,380 1140,300']], 0, S);
  roads([[18,'15,370 130,300 330,190 432,125'],[17,'478,388 400,418 245,475 230,460 90,515 45,530 30,548 45,650 75,840 90,900'],[24,'425,0 440,90 470,220 500,370 545,540 580,660 620,760 680,890 765,1022 755,1038 600,1090 430,1150 330,1215 305,1232'],[14,'15,1275 60,1308 190,1260 270,1245 320,1225'],[10,'850,1515 865,1498']], 0, 0);
  roads([[22,'400,488 500,500 600,540 690,588 765,635 820,705'],[18,'860,72 840,160 820,330 800,480 765,635'],[11,'310,438 370,485']], E, 0);
  roads([[18,'1995,735 1995,900 2015,1150 2020,1390 2080,1520 2170,1700 2225,1806']], 0, 0);
  roads([[8,'15,960 15,905']], 0, 0);

  /* classified roads */
  poly('#f7fabf', '305,0 375,0 375,70 345,35', E, 0, '#9a9840');
  const Yd = '-10,50 25,60 80,130 160,240 210,290 250,312 330,355 500,440 700,545 900,645 1060,745', Y2 = '1060,790 990,930';
  [Yd, Y2].forEach(s => line('#898728', 38, s, 0, S)); [Yd, Y2].forEach(s => line('#f7fabf', 34, s, 0, S));
  const tr = '1535,-10 1537,200 1530,400 1520,520 1490,650 1420,840 1375,960 1310,1110 1200,1340 1140,1490 1095,1610 1088,1664 1118,1820', ae = '1530,40 1590,55 1740,85 1880,115 1990,142 2070,190 2180,290 2280,400';
  const flare = 'M1560,20Q1575,45 1625,50L1620,90Q1580,82 1562,112Z';
  parts.push(`<path d="${flare}" fill="#fcd6a4" stroke="#a06b00" stroke-width="3"/>`);
  [tr, ae].forEach(s => line('#a47421', 52, s)); parts.push('<circle cx="1078" cy="1664" r="46" fill="#a47421"/>');
  [tr, ae].forEach(s => line('#fcd6a4', 48, s)); parts.push(`<path d="${flare}" fill="#fcd6a4"/><circle cx="1078" cy="1664" r="44" fill="#fcd6a4"/><path d="M1022,1622L1060,1642L1048,1672L1020,1656Z" fill="#f7fabf" opacity=".0"/><circle cx="1078" cy="1664" r="17" fill="#f7e9d2" stroke="#a47421" stroke-width="3"/><path d="M1080,1652H1090V1676H1080Z" fill="#c9e7a9"/>`);
  line('#6b6b6b', 4, '455,0 455,30 480,70', E); line('#6b6b6b', 4, '565,0 590,45 605,95 740,115 850,137 920,180 1050,300 1140,400', E);
  line('#222', 4, '360,510 355,548', E); line('#222', 4, '397,512 393,550', E);

  /* railway */
  const rail = '15,1345 300,1245 600,1140 850,1045 1140,970 1400,880 1680,795 1800,755 2100,665 2270,604';
  line('#aaa', 3, '460,1180 850,1035 1140,950 1350,885'); line('#b6b6b6', 3, '600,1120 1000,990 1180,930'); line('#999', 3, '500,1160 900,1018 1140,940'); line('#a5a5a5', 3, '640,1112 900,1026 1160,945');
  line('#707070', 16, rail);
  line('#f5f5f5', 3, rail, 0, -3, 'stroke-dasharray="22 22"');
  line('#e0e0e0', 2.5, rail, 0, 3, 'stroke-dasharray="22 22" stroke-dashoffset="8"');
  line('#333', 3, '637,750 668,742', E); line('#333', 3, '640,778 676,770', E);
  line('#333', 3, '258,350 300,325 320,330', 0, S); line('#333', 3, '270,370 290,368 330,345', 0, S);

  /* footpaths */
  const foot = (s, dx, dy) => { line('#fff', 7, s, dx, dy, 'opacity=".45"'); line('#fa8072', 3.2, s, dx, dy, 'stroke-dasharray="7 5" opacity=".9"'); };
  ['240,50 260,48 360,48','155,470 190,455 260,455 330,480 360,510','275,455 300,475 360,500','150,485 180,540 225,600 228,640','400,510 410,505','640,590 640,650 655,745 640,790 645,890','640,590 700,700 740,660 710,625 650,600','655,720 740,680','665,650 725,650','670,610 665,655 710,690','290,890 400,850 620,775 820,720 840,735','680,770 745,825 768,900','427,370 500,375 500,395','710,355 715,315 750,320','570,400 590,400 590,385','943,840 943,895'].forEach(s => foot(s, E));
  ['655,0 655,50 640,85 580,140 540,160 490,240 450,330 400,360 345,355 325,310 305,293 260,283 200,275 190,260','775,0 770,100 730,190 680,270 610,365 560,430 490,470 400,505 355,510 350,500','200,275 200,340 250,370 290,290','100,470 200,410 260,370','95,480 30,600 30,700 50,740 0,745','60,520 65,620','90,480 80,600 100,650 140,740 240,900','0,745 150,745 120,690 90,720','120,740 125,850','80,560 90,660 150,790 190,850','710,228 855,228','830,228 800,290 755,300 850,380','600,410 640,435','800,290 820,250','855,250 830,228','600,410 690,440','860,370 720,500','855,395 760,500 600,640','700,430 800,480 850,545','410,585 500,570 600,510 690,430','580,510 700,620 650,640','425,585 460,610 640,645 700,625','460,700 470,640 520,620 640,520','460,700 440,740','520,620 500,650 540,690 580,750','600,640 600,755','630,650 620,750','740,520 760,560 850,545','480,700 540,690 700,600 720,560 820,570','850,420 790,530 850,550','700,430 760,520 830,530','700,500 735,520 755,560','285,590 285,540 325,520','285,590 325,600 355,660 358,740 335,810 340,855 380,862 480,845 580,862 660,820 760,795 830,805 960,850 1010,880','830,810 860,740','0,570 30,600','410,510 410,585','320,530 325,600','820,805 835,760','50,350 70,420 90,480'].forEach(s => foot(s, E, S));
  ['70,360 140,300','400,460 440,490 410,490','1040,710 1080,700','1060,830 1060,870 1040,900','1140,745 1120,740'].forEach(s => foot(s, 0, S));
  const dirt = (s, dx, dy) => line('#ac8331', 5, s, dx, dy, 'stroke-dasharray="17 6 5 6"');
  ['155,56 295,58','605,290 605,250 580,258 570,235','605,245 620,200 650,172 675,170 690,215','905,1013 920,907 1110,857 1230,848','905,1013 1010,985 1185,923'].forEach(s => dirt(s));
  ['683,268 720,330 800,420','770,320 810,360 800,420 830,470 843,540'].forEach(s => dirt(s, E, S));
  line('#0b7a22', 4, '775,0 790,40 800,110 825,200 855,245', E, S, 'stroke-dasharray="9 6"');
  line('#3d56ff', 3, '455,860 455,905', E, S, 'stroke-dasharray="14 6"'); line('#3d56ff', 3, '1120,810 1140,870', 0, S, 'stroke-dasharray="8 5"');
  parts.push('<path d="M1403,1458H1426V1466H1403Z" fill="#f7c9c2"/><path d="M1402,1456H1427M1402,1468H1427" stroke="#555" stroke-width="3"/><circle cx="1321" cy="542" r="5" fill="#fff" stroke="#444" stroke-width="3"/>');
  line('#aad3df', 10, '335,82 350,105', E, S); blob('#aad3df', '903,422 918,420 920,435 905,438', E, S); blob('#aad3df', '365,580 382,578 382,587 367,588', 0, S); blob('#aad3df', '1020,803 1036,803 1036,816 1020,816', E, 0);
  pitch('948,880 960,880 960,900 948,900', E, 0);

  /* point symbols */
  parts.push(`<rect x="2139" y="252" width="18" height="18" fill="#7981b8"/><rect x="1260" y="947" width="19" height="19" fill="#7981b0"/><rect x="1169" y="972" width="19" height="19" fill="#7981b0"/>
<path d="M1629,451V472M1621,458H1637" stroke="#6e9672" stroke-width="4"/>
<g fill="none" stroke="#7faf70" stroke-width="2.500"><path d="M1590,604V590M1583,590Q1590,565 1597,590ZM1604,604V592M1598,592A7,9 0 1 1 1610,592Z"/><g transform="translate(-1290 712)"><path d="M1590,604V590M1583,590Q1590,565 1597,590ZM1604,604V592M1598,592A7,9 0 1 1 1610,592Z"/></g><g transform="translate(-1182 778)"><path d="M1590,604V590M1604,604V590M1598,592A7,9 0 1 1 1610,592ZM1584,590A7,9 0 1 1 1596,590Z"/></g><g transform="translate(-1075 830)"><path d="M1590,604V590M1604,604V590M1598,592A7,9 0 1 1 1610,592ZM1584,590A7,9 0 1 1 1596,590Z"/></g></g>
<g stroke="#0e7b1a" fill="#0e7b1a"><path d="M1648,1010V1056" stroke-width="3"/><path d="M1648,1008L1663,1014L1648,1021Z"/><circle cx="1684" cy="1020" r="4"/><path d="M1682,1028L1681,1040L1668,1056M1682,1040L1688,1048V1056" fill="none" stroke-width="5"/><path d="M1683,1028L1692,1016L1684,1009L1668,1008" fill="none" stroke-width="3"/></g>
<path d="M118,1248A16,10 0 1 0 148,1248A16,10 0 1 0 118,1248Z" fill="#c9beb4" stroke="#b09f92" stroke-width="2"/>
<rect x="1493" y="172" width="80" height="52" rx="5" fill="#f1cfca" stroke="#d59a93" stroke-width="3"/>`);

  /* labels */
  parts.push('<g font-family="Noto Sans,Open Sans,sans-serif" stroke="#fff" stroke-opacity=".85" stroke-width="4.500" stroke-linejoin="round" paint-order="stroke">');
  parts.push('<g stroke="none">'); label('DN1', 1502, 208, 1562, 208, 0, 0, '#59271f', 29); parts.push('</g>');
  label('Coralilor', 24, 381, 112, 332);
  label('Strada Liliacului', 572, 319, 742, 270);
  label('Strada Nuferilor', 592, 395, 762, 338);
  label('Aleea Tripoli', 586, 508, 716, 467);
  label('Intrarea Străulești', 250, 825, 428, 727);
  curved('Șoseaua Străulești', 'M606,760Q640,850 674,915T725,1010', 240);
  label('Strada Băiculești', 446, 1158, 643, 1093);
  curved('Strada Tipografilor', 'M776,1163Q850,1140 984,1094', 208);
  curved('a Gârlei', 'M1016,10Q1030,60 1044,105', 84);
  curved('stantin Dobrogeanu-Gherea', 'M1141,10Q1180,125 1215,165T1325,295', 310);
  label('mesul Rece', 167, 15, 252, 103, E, 0);
  curved('Bulevardul Aerogării', 'M1622,90Q1750,122 1925,140', 282, 28);
  label('Strada Băneasa', 602, 192, 774, 222, E, 0);
  label('Strada Marinarilor', 590, 274, 790, 308, E, 0);
  label('Strada Horia Măcelariu', 475, 416, 728, 462, E, 0);
  label('Strada Horia Măcelariu', 831, 480, 1083, 527, E, 0);
  label('Strada Neagoe Vodă', 558, 408, 594, 186, E, 0);
  label('Bulevardul Ficusului', 792, 556, 828, 308, E, 0, '#000', 27);
  label('Strada Ocna', 992, 620, 1124, 580, E, 0);
  curved('Aleea Mateloților', 'M1310,800Q1330,740 1355,700T1410,635', 180);
  curved('Șoseaua București-Ploiești', 'M1400,950Q1445,830 1480,730T1522,590', 368, 28);
  curved('Bulevardul Poligrafiei', 'M240,1225Q330,1270 380,1300T526,1374', 302, 28);
  label('Bulevardul Poligrafiei', 668, 568, 935, 705, 0, S, '#000', 28);
  label('ajurei', 17, 352, 75, 402, 0, S);
  label('Parcului', 18, 511, 100, 486, 0, S);
  label('Strada Menuetului', 1136, 1050, 1145, 1255);
  label('Șoseaua Nordului', 843, 865, 862, 1087, E, 0);
  curved('Șoseaua Nordului', 'M2010,1390Q2030,1460 2115,1620', 228);
  label('Strada Aron Cotruș', 1001, 783, 1010, 997, E, 0);
  curved('Strada Sanui Francez', 'M2040,1055Q2050,900 2028,815', 225);
  label('Dmi', 1111, 1385, 1116, 1440, E, 0);
  label('ad 1B', 34, 1800, 28, 1740, 0, 0, '#333', 22);
  label('800', 502, 780, 552, 770, E, 0, '#7a7a7a', 30); label('800', 230, 416, 276, 406, 0, S, '#7a7a7a', 30); label('800', 933, 178, 980, 167, 0, S, '#7a7a7a', 30);
  const I = 'font-style="italic"', mid = (t, x, y, c, z, e = '', len = 0) => parts.push(`<text x="${x}" y="${y}" text-anchor="middle" fill="${c}" font-size="${z}" ${e} ${len ? `textLength="${len}" lengthAdjust="spacingAndGlyphs"` : ''}>${t}</text>`);
  mid('Petrom', 292, 340, '#8a3a46', 29, I, 94); mid('City', 293, 375, '#8a3a46', 29, I, 48);
  mid('Romexpo', 600, 1742, '#8a3a46', 30, I, 146);
  mid('București', 1269, 1011, '#4b5aa8', 32, 'font-weight="700"', 154); mid('Băneasa', 1269, 1050, '#4b5aa8', 32, 'font-weight="700"', 136);
  mid('Clubul', 1670, 1093, '#1f8532', 30, '', 90); mid('Diplomaților', 1670, 1129, '#1f8532', 30, '', 174);
  [['Parcul', 98], ['Regele', 102], ['Mihai I', 112], ['Al României', 188]].forEach(([t, l], i) => { mid(t, 1336, 1211 + i * 43, '#1c7529', 33, I, l); mid(t, 1863, 1259 + i * 43, '#1c7529', 33, I, l); });
  mid('Lacul Herăstrău', 1348, 1428, '#4e7fbd', 38, I, 312);
  curved('Colentina', 'M1278,1440Q1285,1510 1316,1600', 148, 33, '#5586c2', I);
  label('Colentina', 1056, 810, 1203, 778, 0, 0, '#5586c2', 35, I);
  parts.push('</g><path d="M612,6Q618,12 624,6" fill="none" stroke="#5586c2" stroke-width="3"/>');

  /* marker */
  parts.push(`<defs><linearGradient id="mg" x2="0" y2="1"><stop offset="0" stop-color="#3883b7"/><stop offset="1" stop-color="#126fc6"/></linearGradient><filter id="bl" x="-50%" y="-50%" width="200%" height="200%"><feGaussianBlur stdDeviation="6"/></filter></defs>
<path d="M1143,902L1163,858Q1188,826 1206,838Q1214,852 1185,878Z" fill="#000" opacity=".3" filter="url(#bl)"/>
<path d="M1141,902C1137,883 1103,848 1104,820A37,37 0 0 1 1178,820C1179,848 1145,883 1141,902Z" fill="url(#mg)" stroke="#286aa0" stroke-width="3"/><circle cx="1141" cy="822" r="14" fill="#fff" stroke="#2d77ad" stroke-width="1.500"/>`);
  return parts.join('');
}

define('osm-canvas', `
<style>:host{display:block}svg{display:block}</style>
<div></div>`, root => {
  root.querySelector('div').innerHTML = `<svg width="750" height="600" viewBox="15 6 2250 1800">${buildMap()}</svg>`;
});

define('map-view', `
<style>
:host{display:block;position:relative;width:750px;height:600px;margin:0 auto;overflow:hidden;background:#ddd;font-family:"Liberation Sans",Arial,sans-serif}
.zoom{position:absolute;left:10px;top:10px;width:26px;border-radius:4px;background:#fff;box-shadow:0 1px 5px rgba(0,0,0,.65);display:flex;flex-direction:column}
.zoom svg{display:block;height:25px}
.zoom svg+svg{border-top:1px solid #ccc;height:26px}
.scale{position:absolute;left:5px;bottom:5px;font-size:11px;line-height:13px;color:#333;display:flex;flex-direction:column;align-items:flex-start;text-align:center}
.scale div{border:2px solid #777;background:rgba(255,255,255,.5);box-sizing:border-box;height:17px}
.m{width:88px;border-top:none!important;padding-top:1px}
.f{width:90px;margin-top:-2px;border-bottom:none!important;padding-top:1px}
.attr{position:absolute;right:0;bottom:0;padding:0 5px;background:rgba(255,255,255,.7);color:#0078a8;font-size:11px;line-height:16px}
</style>
<osm-canvas></osm-canvas>
<div class="zoom"><svg width="26" viewBox="0 0 26 25"><path d="M13 8V18M8 13H18" stroke="#000" stroke-width="2"/></svg><svg width="26" viewBox="0 0 26 26"><path d="M8.500 13H18.500" stroke="#000" stroke-width="2"/></svg></div>
<div class="scale"><div class="m">300 m</div><div class="f">1000 ft</div></div>
<div class="attr">Leaflet</div>`);

define('app-window', `
<style>
:host{display:flex;flex-direction:column;width:1920px;height:1040px}
main{height:765px;background:#f1f1f1}
</style>
<tab-strip></tab-strip>
<tool-bar></tool-bar>
<site-header><nav-link>MY IPADDRESS</nav-link><nav-link>EXACT HOUR</nav-link><nav-link>TRACEROUTE</nav-link><nav-link>ABOUT</nav-link></site-header>
<main><ip-heading>84.232.215.168</ip-heading><map-view></map-view></main>
<site-footer></site-footer>`);
</script>
</body>
</html>
